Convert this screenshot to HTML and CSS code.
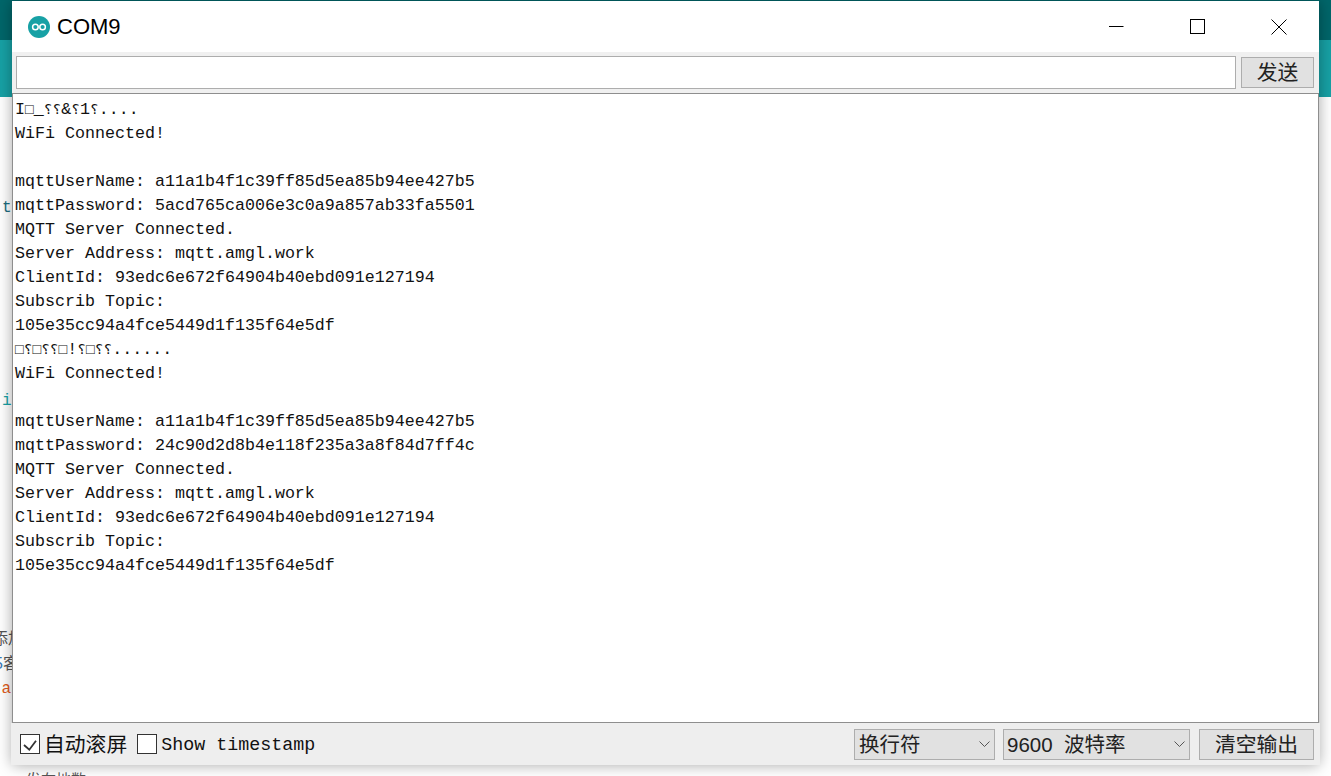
FILE: index.html
```html
<!DOCTYPE html>
<html lang="zh">
<head>
<meta charset="utf-8">
<title>COM9</title>
<link rel="stylesheet" href="styles.css">
</head>
<body>
<div class="desktop">
  <div class="backdrop">
    <div class="band-dark"></div>
    <div class="band-teal"></div>
    <div class="page"></div>
  </div>
  <span class="peek peek-t">t.</span>
  <span class="peek peek-i">i</span>
  <span class="peek peek-a">添加</span>
  <span class="peek peek-b"><span class="peek-blue">5</span>客</span>
  <span class="peek peek-c">.a</span>
  <span class="peek peek-d">发布地数</span>
  <section class="window">
    <header class="titlebar">
      <svg class="logo" width="24" height="24" viewBox="0 0 24 24">
        <circle cx="12" cy="12" r="11" fill="#17a1a5"/>
        <circle cx="8.4" cy="12" r="2.8" fill="none" stroke="#fff" stroke-width="1.5"/>
        <circle cx="15.6" cy="12" r="2.8" fill="none" stroke="#fff" stroke-width="1.5"/>
      </svg>
      <span class="title">COM9</span>
      <div class="controls">
        <span class="ctl"><svg width="16" height="16" viewBox="0 0 16 16"><path d="M-0.5 7.5H14.5" stroke="#000" fill="none"/></svg></span>
        <span class="ctl"><svg width="16" height="16" viewBox="0 0 16 16"><rect x="0.5" y="0.5" width="14" height="14" stroke="#000" fill="none"/></svg></span>
        <span class="ctl"><svg width="16" height="16" viewBox="0 0 16 16"><path d="M0.5 0.5L15.5 15.5M15.5 0.5L0.5 15.5" stroke="#000" fill="none"/></svg></span>
      </div>
    </header>
    <div class="sendrow">
      <div class="input"></div>
      <div class="btn send">发送</div>
    </div>
    <pre class="output">I<span class="g">□</span>_<span class="g">⸮⸮</span>&amp;<span class="g">⸮</span>1<span class="g">⸮</span>....
WiFi Connected!

mqttUserName: a11a1b4f1c39ff85d5ea85b94ee427b5
mqttPassword: 5acd765ca006e3c0a9a857ab33fa5501
MQTT Server Connected.
Server Address: mqtt.amgl.work
ClientId: 93edc6e672f64904b40ebd091e127194
Subscrib Topic:
105e35cc94a4fce5449d1f135f64e5df
<span class="g">□⸮□⸮⸮□</span>!<span class="g">⸮□⸮⸮</span>......
WiFi Connected!

mqttUserName: a11a1b4f1c39ff85d5ea85b94ee427b5
mqttPassword: 24c90d2d8b4e118f235a3a8f84d7ff4c
MQTT Server Connected.
Server Address: mqtt.amgl.work
ClientId: 93edc6e672f64904b40ebd091e127194
Subscrib Topic:
105e35cc94a4fce5449d1f135f64e5df</pre>
    <footer class="statusbar">
      <span class="check">
        <svg width="18" height="18" viewBox="0 0 18 18"><path d="M3 10L8.3 14.7L15 5.7" stroke="#333" stroke-width="1.8" fill="none"/></svg>
      </span>
      <span class="label cjk">自动滚屏</span>
      <span class="check second"></span>
      <span class="label mono">Show timestamp</span>
      <div class="spacer"></div>
      <div class="select sel-line"><span class="seltext">换行符</span><svg width="11" height="6" viewBox="0 0 11 6"><path d="M0.5 0.5L5.5 5.5L10.5 0.5" stroke="#555" fill="none"/></svg></div>
      <div class="select sel-baud"><span class="seltext">9600 &nbsp;波特率</span><svg width="11" height="6" viewBox="0 0 11 6"><path d="M0.5 0.5L5.5 5.5L10.5 0.5" stroke="#555" fill="none"/></svg></div>
      <div class="btn clear">清空输出</div>
    </footer>
  </section>
</div>
</body>
</html>
```

FILE: styles.css
```css
* { box-sizing: border-box; }
html, body { margin: 0; padding: 0; }
body { width: 1331px; height: 776px; overflow: hidden; background: #fff; font-family: "Liberation Mono", "Noto Sans CJK SC", monospace; }
.desktop { position: relative; width: 1331px; height: 776px; overflow: hidden; }
.backdrop { display: flex; flex-direction: column; height: 100%; }
.band-dark { height: 40px; background: #00666a; }
.band-teal { height: 57px; background: #17a1a5; }
.page { flex: 1; background: #fff; }
.peek { position: absolute; font-size: 16px; line-height: 20px; white-space: nowrap; }
.peek-t { left: 2px; top: 198px; color: #1c6d80; }
.peek-i { left: 2px; top: 391px; color: #17a1a5; }
.peek-a { left: -8px; top: 630px; color: #555; }
.peek-b { left: -6px; top: 654px; color: #555; font-family: "Liberation Sans", "Noto Sans CJK SC", sans-serif; }
.peek-blue { color: #3a7ab8; }
.peek-c { left: -8px; top: 679px; color: #e05a20; }
.peek-d { left: 26px; top: 772px; color: #555; font-size: 15px; }
.window { position: absolute; left: 12px; top: 1px; width: 1307px; height: 764px; background: #f0f0f0; display: flex; flex-direction: column; box-shadow: 0 0 14px rgba(0,0,0,.35); }
.titlebar { height: 51px; flex: none; background: #fff; display: flex; align-items: center; padding-left: 15px; }
.logo { flex: none; }
.title { margin-left: 6px; font: 22px "Liberation Sans", sans-serif; color: #000; }
.controls { margin-left: auto; display: flex; }
.ctl { width: 81px; height: 51px; display: flex; align-items: center; justify-content: center; }
.sendrow { height: 41px; flex: none; display: flex; padding: 4px 5px 0 4px; gap: 5px; }
.input { width: 1220px; height: 33px; background: #fff; border: 1px solid #adadad; }
.btn { background: #e1e1e1; border: 1px solid #adadad; display: flex; align-items: center; justify-content: center; padding-bottom: 3px; font-family: "Noto Sans CJK SC", sans-serif; font-size: 20.8px; color: #222; }
.send { width: 73px; height: 31px; margin-top: 1px; }
.output { margin: 0; flex: 1; background: #fff; border: 1px solid #8e8e8e; padding: 4px 0 0 2px; font: 16.67px/24px "Liberation Mono", "DejaVu Sans Mono", "Noto Sans CJK SC", monospace; color: #111; overflow: hidden; }
.g { font-size: 14.5px; }
.statusbar { height: 42px; flex: none; display: flex; align-items: center; padding: 0 6px 0 9px; margin: 0 -1px; background: #eee; }
.check { width: 20px; height: 20px; background: #fff; border: 1px solid #333; flex: none; display: flex; }
.second { margin-left: 10px; }
.label { margin-left: 4px; font-size: 20.8px; color: #111; padding-bottom: 2px; }
.mono { margin-left: 4px; font-family: "Liberation Mono", monospace; font-size: 18.33px; padding: 3px 0 0; }
.cjk { font-family: "Noto Sans CJK SC", sans-serif; }
.spacer { flex: 1; }
.select { height: 31px; background: #e1e1e1; border: 1px solid #adadad; display: flex; align-items: center; justify-content: space-between; padding: 0 4px 0 4px; font-size: 20.5px; color: #222; }
.seltext { font-family: "Liberation Sans", "Noto Sans CJK SC", sans-serif; padding-bottom: 2px; }
.sel-line { width: 141px; }
.sel-baud { width: 187px; margin-left: 8px; padding-left: 3px; }
.clear { width: 115px; height: 31px; margin-left: 9px; }
```
